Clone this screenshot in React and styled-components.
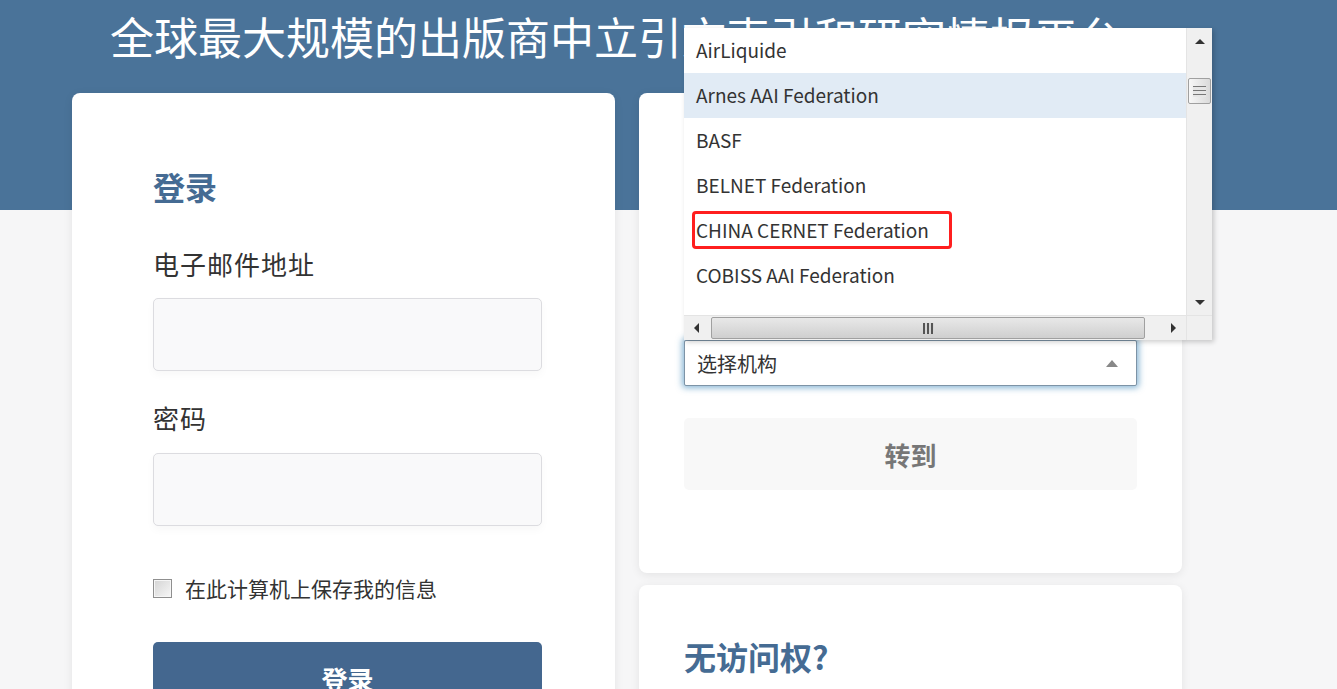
import styled, { createGlobalStyle } from 'styled-components';

const GlobalStyle = createGlobalStyle`
  html, body {
    margin: 0;
    padding: 0;
  }
  body {
    font-family: "Noto Sans CJK SC", "Noto Sans", sans-serif;
    color: #333;
    background: #f6f6f7;
  }
`;

const Page = styled.div`
  min-height: 100vh;
  overflow: hidden;
  background: linear-gradient(
    to bottom,
    #4a7399 0,
    #4a7399 210px,
    #f6f6f7 210px
  );
`;

const Title = styled.h1`
  margin: 0;
  padding: 10px 0 0 110px;
  font-size: 44px;
  font-weight: 400;
  line-height: 52px;
  color: #fff;
  white-space: nowrap;
`;

const Columns = styled.div`
  display: grid;
  grid-template-columns: 543px 543px;
  column-gap: 24px;
  align-items: start;
  margin: 31px 0 0 72px;
`;

const Side = styled.div`
  display: flex;
  flex-direction: column;
  gap: 12px;
`;

const Card = styled.section`
  background: #fff;
  border-radius: 8px;
  box-shadow: 0 2px 10px rgba(0, 0, 0, 0.08);
  padding: ${(p) => p.$pad};
`;

const Heading = styled.h2`
  margin: 0;
  font-size: 32px;
  font-weight: 700;
  line-height: 36px;
  color: #456b93;
`;

const Label = styled.label`
  display: block;
  margin-top: ${(p) => p.$top}px;
  font-size: 26px;
  line-height: 36px;
  letter-spacing: 1px;
  color: #333;
`;

const TextInput = styled.input`
  display: block;
  width: 100%;
  box-sizing: border-box;
  height: 73px;
  margin-top: ${(p) => p.$top}px;
  background: #f9f9fa;
  border: 1px solid #dcdce0;
  border-radius: 5px;
  box-shadow: 0 4px 8px rgba(0, 0, 0, 0.03);
  outline: none;
`;

const RememberRow = styled.label`
  display: flex;
  align-items: center;
  gap: 13px;
  margin-top: 47px;
  font-size: 21px;
  line-height: 30px;
  color: #333;
`;

const Box = styled.span`
  width: 19px;
  height: 19px;
  box-sizing: border-box;
  border: 1px solid #8f8f8f;
  background: linear-gradient(135deg, #d4d4d4, #f7f7f7);
  box-shadow: inset 0 0 0 1px #f6f6f6;
`;

const Button = styled.button`
  display: block;
  width: 100%;
  height: 72px;
  margin-top: ${(p) => p.$top}px;
  border: none;
  border-radius: 5px;
  font-family: inherit;
  font-size: 26px;
  font-weight: 700;
  background: ${(p) => (p.$primary ? '#44678f' : '#f8f8f8')};
  color: ${(p) => (p.$primary ? '#fff' : '#777')};
`;

const SelectWrap = styled.div`
  position: relative;
`;

const SelectBox = styled.div`
  display: flex;
  align-items: center;
  justify-content: space-between;
  height: 46px;
  box-sizing: border-box;
  padding: 0 18px 0 12px;
  border: 1px solid #7d93a6;
  border-radius: 2px;
  background: #fff;
  box-shadow: 0 0 6px 2px rgba(60, 135, 185, 0.6);
  font-size: 20px;
  color: #333;
`;

const Caret = styled.span`
  width: 0;
  height: 0;
  border-left: 6px solid transparent;
  border-right: 6px solid transparent;
  border-bottom: 7px solid #888;
`;

/* the open option list, sitting above the select */
const ListBox = styled.div`
  position: absolute;
  left: 0;
  bottom: 100%;
  width: 528px;
  height: 312px;
  display: grid;
  grid-template-columns: 1fr 26px;
  grid-template-rows: 1fr 25px;
  background: #fff;
  box-shadow: 2px 2px 5px rgba(0, 0, 0, 0.2);
  z-index: 2;
`;

const Options = styled.ul`
  margin: 0;
  padding: 0;
  list-style: none;
  overflow: hidden;
`;

const Option = styled.li`
  height: 45px;
  box-sizing: border-box;
  padding: 0 0 2px 12px;
  display: flex;
  align-items: center;
  font-size: 19px;
  color: #333;
  white-space: nowrap;
  background: ${(p) => (p.$hover ? '#e1ebf5' : '#fff')};

  &:nth-child(7) {
    padding-top: 12px;
  }
`;

const Mark = styled.span`
  display: inline-block;
  margin-left: -4px;
  padding: 0 20px 0 1px;
  line-height: 32px;
  border: 3px solid #ff1f1f;
  border-radius: 4px;
`;

const VTrack = styled.div`
  display: flex;
  flex-direction: column;
  align-items: center;
  background: #f0f0f0;
  border-left: 1px solid #e4e4e4;
`;

const HTrack = styled.div`
  display: flex;
  align-items: center;
  background: #f0f0f0;
  border-top: 1px solid #e4e4e4;
`;

const Corner = styled.div`
  background: #f0f0f0;
  border-top: 1px solid #e4e4e4;
  border-left: 1px solid #e4e4e4;
`;

const ArrowCell = styled.div`
  flex: none;
  display: flex;
  align-items: center;
  justify-content: center;
  width: ${(p) => (p.$h ? '25px' : '100%')};
  height: ${(p) => (p.$h ? '100%' : '26px')};
`;

const Arrow = styled.span`
  width: 0;
  height: 0;
  ${(p) =>
    p.$dir === 'up'
      ? 'border-left: 5px solid transparent; border-right: 5px solid transparent; border-bottom: 5px solid #333;'
      : p.$dir === 'down'
      ? 'border-left: 5px solid transparent; border-right: 5px solid transparent; border-top: 5px solid #333;'
      : p.$dir === 'left'
      ? 'border-top: 5px solid transparent; border-bottom: 5px solid transparent; border-right: 5px solid #333;'
      : 'border-top: 5px solid transparent; border-bottom: 5px solid transparent; border-left: 5px solid #333;'}
`;

const VThumb = styled.div`
  flex: none;
  width: 23px;
  height: 26px;
  margin-top: 24px;
  box-sizing: border-box;
  border: 1px solid #a0a0a0;
  border-radius: 2px;
  background: linear-gradient(to right, #f7f7f7, #dadada);
  display: flex;
  align-items: center;
  justify-content: center;
`;

const VGrip = styled.span`
  width: 13px;
  height: 11px;
  background: repeating-linear-gradient(
    to bottom,
    #777 0,
    #777 1px,
    #e6e6e6 1px,
    #e6e6e6 4px
  );
`;

const Spacer = styled.div`
  flex: 1;
`;

const HThumb = styled.div`
  flex: none;
  width: 434px;
  height: 22px;
  margin-left: 2px;
  box-sizing: border-box;
  border: 1px solid #a0a0a0;
  border-radius: 2px;
  background: linear-gradient(to bottom, #e8e8e8, #cfcfcf);
  display: flex;
  align-items: center;
  justify-content: center;
`;

const HGrip = styled.span`
  width: 11px;
  height: 11px;
  background: repeating-linear-gradient(
    to right,
    #555 0,
    #555 2px,
    #d6d6d6 2px,
    #d6d6d6 4px
  );
`;

const institutions = [
  'AirLiquide',
  'Arnes AAI Federation',
  'BASF',
  'BELNET Federation',
  'CHINA CERNET Federation',
  'COBISS AAI Federation',
  'Canadian Access Federation',
];

function InstitutionList() {
  return (
    <ListBox>
      <Options>
        {institutions.map((name) => (
          <Option key={name} $hover={name === 'Arnes AAI Federation'}>
            {name === 'CHINA CERNET Federation' ? <Mark>{name}</Mark> : name}
          </Option>
        ))}
      </Options>
      <VTrack>
        <ArrowCell>
          <Arrow $dir="up" />
        </ArrowCell>
        <VThumb>
          <VGrip />
        </VThumb>
        <Spacer />
        <ArrowCell>
          <Arrow $dir="down" />
        </ArrowCell>
      </VTrack>
      <HTrack>
        <ArrowCell $h>
          <Arrow $dir="left" />
        </ArrowCell>
        <HThumb>
          <HGrip />
        </HThumb>
        <Spacer />
        <ArrowCell $h>
          <Arrow $dir="right" />
        </ArrowCell>
      </HTrack>
      <Corner />
    </ListBox>
  );
}

export default function App() {
  return (
    <Page>
      <GlobalStyle />
      <Title>全球最大规模的出版商中立引文索引和研究情报平台</Title>
      <Columns>
        <Card $pad="75px 73px 40px 81px">
          <Heading>登录</Heading>
          <Label $top={42}>电子邮件地址</Label>
          <TextInput $top={16} type="email" />
          <Label $top={29}>密码</Label>
          <TextInput $top={17} type="password" />
          <RememberRow>
            <Box />
            在此计算机上保存我的信息
          </RememberRow>
          <Button $primary $top={39}>
            登录
          </Button>
        </Card>
        <Side>
          <Card $pad="247px 45px 83px 45px">
            <SelectWrap>
              <InstitutionList />
              <SelectBox>
                选择机构
                <Caret />
              </SelectBox>
            </SelectWrap>
            <Button $top={32}>转到</Button>
          </Card>
          <Card $pad="53px 45px 60px 45px">
            <Heading>无访问权?</Heading>
          </Card>
        </Side>
      </Columns>
    </Page>
  );
}
